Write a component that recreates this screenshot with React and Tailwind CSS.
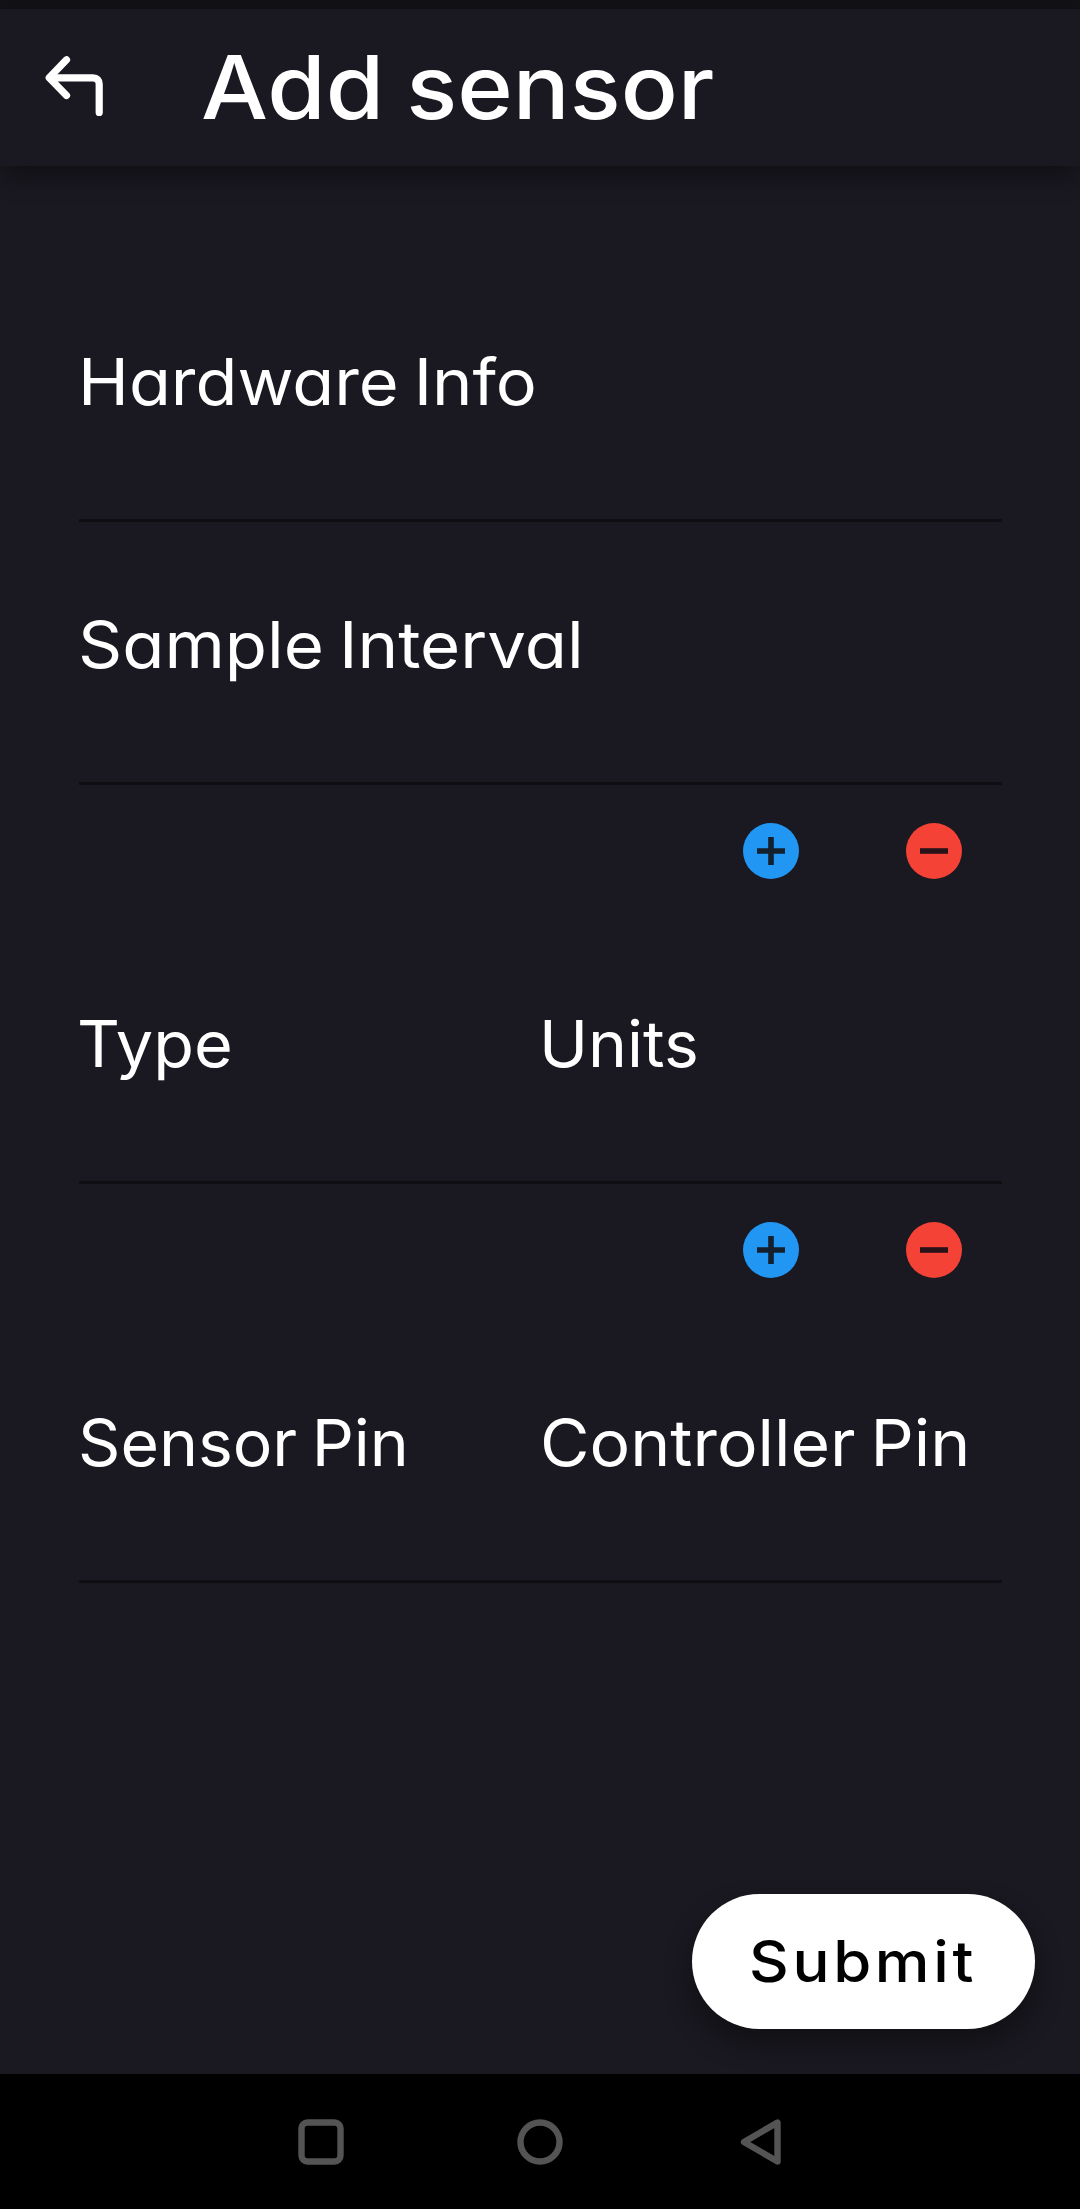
const FONT = "font-['Inter','Open_Sans',sans-serif] [font-feature-settings:'cv11']";

function BackIcon() {
  return (
    <svg className="h-[60px] w-[58px] shrink-0" viewBox="0 0 58 60" fill="none" stroke="#fff" strokeWidth="7.2" strokeLinecap="round" strokeLinejoin="round">
      <path d="M21.5 3.8 4.2 21.8 21.5 39.5" />
      <path d="M5 21.8H48C52 21.8 54.2 24.2 54.2 28V56.400" />
    </svg>
  );
}

function AddIcon() {
  return (
    <svg className="size-14" viewBox="0 0 20 20">
      <circle cx="10" cy="10" r="10" fill="#2196f3" />
      <path d="M9 5h2v4h4v2h-4v4H9v-4H5V9h4z" fill="#15202e" />
    </svg>
  );
}

function RemoveIcon() {
  return (
    <svg className="size-14" viewBox="0 0 20 20">
      <circle cx="10" cy="10" r="10" fill="#f44336" />
      <path d="M5 9h10v2H5z" fill="#2a1318" />
    </svg>
  );
}

function Label({ children, className }) {
  return (
    <div className="flex-1">
      <span className={`block w-fit origin-left whitespace-nowrap text-[64px] leading-[80px] text-white [word-spacing:-4px] ${className}`}>{children}</span>
    </div>
  );
}

function Field({ children }) {
  return <div className="flex h-[263px] border-b-3 border-[#0f0e13] pt-[83px]">{children}</div>;
}

function Controls() {
  return (
    <div className="flex h-[136px] items-start justify-end gap-[107px] pt-[38px] pr-10">
      <button type="button" aria-label="Add"><AddIcon /></button>
      <button type="button" aria-label="Remove"><RemoveIcon /></button>
    </div>
  );
}

export default function App() {
  return (
    <div className={`flex h-[2209px] w-[1080px] flex-col overflow-hidden bg-[#1a1820] ${FONT}`}>
      <div className="h-[9px] shrink-0 bg-[#121116]" />
      <header className="z-10 flex h-[157px] shrink-0 items-start bg-[#1a1820] pl-[45px] shadow-[0_15px_20px_-6px_rgba(16,16,18,0.9)]">
        <button type="button" aria-label="Back" className="mt-[47px]"><BackIcon /></button>
        <h1 className="mt-[28px] ml-[98px] origin-left scale-x-[1.075] whitespace-nowrap text-[88px] leading-[100px] font-medium text-white [word-spacing:-3px]">Add sensor</h1>
      </header>

      <main className="flex flex-1 flex-col pt-[93px] pr-[78px] pl-[79px]">
        <Field><Label className="-ml-px scale-x-[1.07]">Hardware Info</Label></Field>
        <Field><Label className="-ml-px scale-x-[1.077]">Sample Interval</Label></Field>
        <Controls />
        <Field>
          <Label className="-ml-0.5 scale-x-[1.04]">Type</Label>
          <Label className="-ml-0.5 scale-x-[1.03]">Units</Label>
        </Field>
        <Controls />
        <Field>
          <Label className="-ml-px scale-x-[1.032]">Sensor Pin</Label>
          <Label className="-ml-px scale-x-[1.06]">Controller Pin</Label>
        </Field>
        <button
          type="button"
          className="mt-auto -mr-[33px] mb-[45px] flex h-[135px] w-[343px] items-start self-end rounded-full bg-white pt-[33px] pl-[57px] shadow-[0_14px_24px_rgba(14,14,16,0.7)]"
        >
          <span className="origin-left scale-x-[1.08] text-[57px] leading-[70px] font-medium tracking-[3.4px] text-black">Submit</span>
        </button>
      </main>

      <nav className="z-10 flex h-[135px] shrink-0 items-center justify-center gap-[173px] bg-black">
        <svg className="size-[46px]" viewBox="0 0 46 46" fill="none" stroke="#545454" strokeWidth="6.400">
          <rect x="3.500" y="3.500" width="39" height="39" rx="6" />
        </svg>
        <svg className="size-[46px]" viewBox="0 0 46 46" fill="none" stroke="#545454" strokeWidth="6.400">
          <circle cx="23" cy="23" r="19.500" />
        </svg>
        <svg className="size-[46px]" viewBox="0 0 46 46" fill="none" stroke="#545454" strokeWidth="6.400" strokeLinejoin="round">
          <path d="M41.500 3.500V42.500L8 23z" />
        </svg>
      </nav>
    </div>
  );
}
